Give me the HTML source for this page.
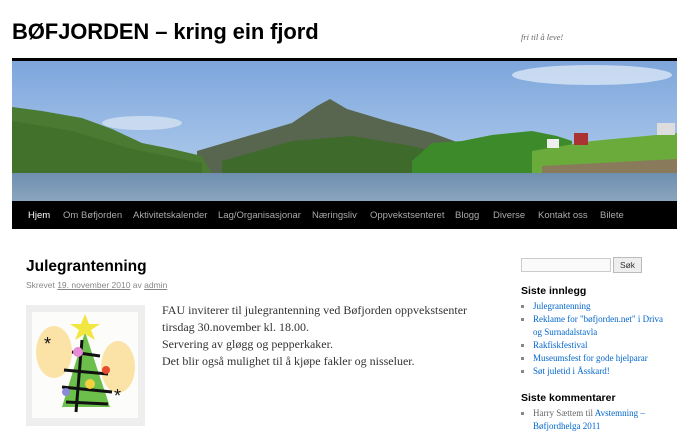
<!DOCTYPE html>
<html><head><meta charset="utf-8"><style>
body{margin:0;width:690px;height:426px;overflow:hidden;background:#fff;font-family:"Liberation Sans",sans-serif;position:relative}
.a{position:absolute}
h1{position:absolute;left:12px;top:19px;margin:0;font-size:22px;font-weight:bold;color:#000;letter-spacing:-0.1px}
.desc{left:521px;top:32px;font:italic 8.5px "Liberation Serif",serif;color:#666}
.nav{left:12px;top:201px;width:665px;height:28px;background:#000}
.nav span{position:absolute;top:9px;font-size:9.5px;color:#aaa}
.side{font:9px/13px "Liberation Serif",serif;color:#0066cc}
.side ul{margin:0;padding:0 0 0 12px;list-style:square;color:#888}
.side li span{color:#0066cc}
.sh{font:bold 10.5px "Liberation Sans",sans-serif;color:#000}
.p{font:12px/17px "Liberation Serif",serif;color:#333}
</style></head><body>
<h1>BØFJORDEN – kring ein fjord</h1>
<div class="a desc">fri til å leve!</div>
<div class="a" style="left:12px;top:58px;width:665px;height:3px;background:#000"></div>
<svg class="a" style="left:12px;top:61px" width="665" height="140" viewBox="0 0 665 140">
<defs><linearGradient id="s" x1="0" y1="0" x2="0" y2="1"><stop offset="0" stop-color="#7ea6dc"/><stop offset="1" stop-color="#b9d3ef"/></linearGradient>
<linearGradient id="w" x1="0" y1="0" x2="0" y2="1"><stop offset="0" stop-color="#6f8fb0"/><stop offset="1" stop-color="#8aa5bd"/></linearGradient></defs>
<rect width="665" height="140" fill="url(#s)"/>
<ellipse cx="580" cy="14" rx="80" ry="10" fill="#d9e6f5" opacity=".8"/>
<ellipse cx="130" cy="62" rx="40" ry="7" fill="#d5e2f2" opacity=".8"/>
<path d="M185,90 L280,62 L305,45 L318,38 L335,48 L375,60 L420,72 L470,90 L470,113 L185,113Z" fill="#58654f"/>
<path d="M210,100 L280,80 L340,75 L400,85 L440,95 L440,113 L210,113Z" fill="#3e6a2c"/>
<path d="M0,46 L30,50 L70,57 L100,68 L130,82 L160,88 L190,95 L200,113 L0,113Z" fill="#4b7a32"/>
<path d="M0,60 L60,70 L120,88 L190,102 L190,113 L0,113Z" fill="#3f6d28" opacity=".7"/>
<path d="M400,100 L420,82 L450,80 L480,74 L520,70 L545,75 L560,80 L560,113 L400,113Z" fill="#3d8a2a"/>
<path d="M520,90 L580,80 L665,72 L665,113 L520,113Z" fill="#6aab3c"/>
<path d="M530,105 L665,98 L665,112 L530,113Z" fill="#8a7a5c"/>
<rect x="562" y="72" width="14" height="12" fill="#a33"/><rect x="535" y="78" width="12" height="9" fill="#eee"/><rect x="645" y="62" width="18" height="12" fill="#ddd"/>
<rect x="0" y="112" width="665" height="28" fill="url(#w)"/>
</svg>
<div class="a nav">
<span style="left:16px;color:#fff">Hjem</span><span style="left:51px">Om Bøfjorden</span><span style="left:121px">Aktivitetskalender</span><span style="left:206px">Lag/Organisasjonar</span><span style="left:300px">Næringsliv</span><span style="left:358px">Oppvekstsenteret</span><span style="left:443px">Blogg</span><span style="left:481px">Diverse</span><span style="left:526px">Kontakt oss</span><span style="left:588px">Bilete</span>
</div>
<div class="a" style="left:26px;top:258px;font-size:15.5px;font-weight:bold;color:#000">Julegrantenning</div>
<div class="a" style="left:26px;top:280px;font-size:8.5px;color:#888">Skrevet <u>19. november 2010</u> av <u>admin</u></div>
<div class="a" style="left:26px;top:305px;width:119px;height:121px;background:#eee"></div>
<svg class="a" style="left:32px;top:312px" width="106" height="106" viewBox="0 0 106 106">
<rect width="106" height="106" fill="#fcfdfa"/>
<ellipse cx="22" cy="40" rx="18" ry="26" fill="#fbe3a8"/><ellipse cx="86" cy="55" rx="17" ry="26" fill="#fbe3a8"/>
<path d="M53,20 L30,95 L78,95Z" fill="#6cbf4a"/>
<path d="M40,40 L68,44 M32,58 L76,62 M30,75 L80,80 M34,90 L76,92 M50,28 L44,100" stroke="#111" stroke-width="3" fill="none"/>
<path d="M53,2 L57,12 L68,12 L59,18 L63,28 L53,22 L43,28 L47,18 L38,12 L49,12Z" fill="#f2e640"/>
<circle cx="46" cy="40" r="5" fill="#e88ad6"/><circle cx="74" cy="58" r="4" fill="#e84a2a"/><circle cx="58" cy="72" r="5" fill="#f2d040"/><circle cx="34" cy="80" r="4" fill="#8a8ad6"/>
<text x="12" y="38" font-size="18" fill="#111">*</text><text x="82" y="90" font-size="18" fill="#111">*</text>
</svg>
<div class="a p" style="left:162px;top:302px">FAU inviterer til julegrantenning ved Bøfjorden oppvekstsenter<br>tirsdag 30.november kl. 18.00.<br>Servering av gløgg og pepperkaker.<br>Det blir også mulighet til å kjøpe fakler og nisseluer.</div>
<div class="a" style="left:521px;top:258px;width:88px;height:12px;border:1px solid #ccc;background:#fafafa"></div>
<div class="a" style="left:613px;top:257px;width:27px;height:14px;border:1px solid #bbb;background:#eee;font-size:8.5px;text-align:center;line-height:14px;color:#333">Søk</div>
<div class="a side" style="left:521px;top:285px;width:150px">
<div class="sh">Siste innlegg</div>
<ul style="margin-top:3px"><li><span>Julegrantenning</span></li><li><span>Reklame for "bøfjorden.net" i Driva og Surnadalstavla</span></li><li><span>Rakfiskfestival</span></li><li><span>Museumsfest for gode hjelparar</span></li><li><span>Søt juletid i Åsskard!</span></li></ul>
<div class="sh" style="margin-top:14px">Siste kommentarer</div>
<ul style="margin-top:3px"><li><span style="color:#666">Harry Sættem til </span><span>Avstemning – Bøfjordhelga 2011</span></li></ul>
</div>
</body></html>
